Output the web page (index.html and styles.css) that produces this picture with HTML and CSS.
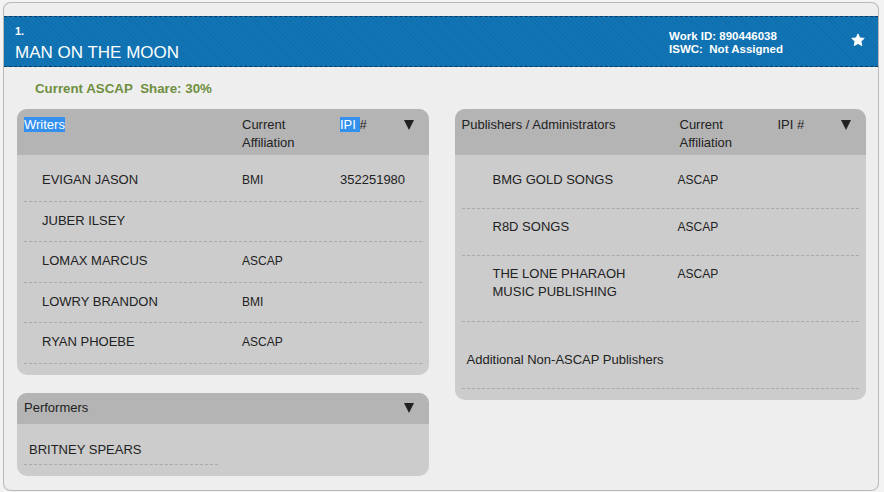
FILE: index.html
```html
<!DOCTYPE html>
<html lang="en">
<head>
  <meta charset="UTF-8" />
  <title>Man on the Moon - ASCAP</title>
  <link rel="stylesheet" href="styles.css">
</head>
<body>

<div class="work-card">
  <div class="work-header">
    <div class="work-title">
      <div class="work-num">1.</div>
      <div class="work-name">MAN ON THE MOON</div>
    </div>
    <div class="work-meta">
      <div>Work ID: 890446038</div>
      <div>ISWC:&nbsp; Not Assigned</div>
    </div>
    <svg class="star" width="14" height="14" viewBox="0 0 24 24">
      <polygon points="12,1.5 15.2,8.4 22.7,9.2 17.1,14.3 18.6,21.7 12,17.9 5.4,21.7 6.9,14.3 1.3,9.2 8.8,8.4" fill="#fff" stroke="#fff" stroke-width="1.5" stroke-linejoin="round"/>
    </svg>
  </div>

  <div class="share">Current ASCAP&nbsp; Share: 30%</div>

  <div class="columns">
    <div class="col">
      <div class="panel">
        <div class="panel-head">
          <div><span class="sel">Writers </span></div>
          <div>Current<br>Affiliation</div>
          <div><span class="sel">IPI </span>#</div>
          <svg class="arrow" width="10" height="10" viewBox="0 0 10 10"><polygon points="0,0 10,0 5,10" fill="#222"/></svg>
        </div>
        <div class="panel-body">
          <div class="row writer">
            <div class="name">EVIGAN JASON</div>
            <div class="aff">BMI</div>
            <div class="ipi">352251980</div>
          </div>
          <div class="row writer">
            <div class="name">JUBER ILSEY</div>
            <div class="aff"></div>
            <div class="ipi"></div>
          </div>
          <div class="row writer">
            <div class="name">LOMAX MARCUS</div>
            <div class="aff">ASCAP</div>
            <div class="ipi"></div>
          </div>
          <div class="row writer">
            <div class="name">LOWRY BRANDON</div>
            <div class="aff">BMI</div>
            <div class="ipi"></div>
          </div>
          <div class="row writer">
            <div class="name">RYAN PHOEBE</div>
            <div class="aff">ASCAP</div>
            <div class="ipi"></div>
          </div>
        </div>
      </div>

      <div class="panel performers">
        <div class="panel-head small">
          <div>Performers</div>
          <svg class="arrow" width="10" height="10" viewBox="0 0 10 10"><polygon points="0,0 10,0 5,10" fill="#222"/></svg>
        </div>
        <div class="panel-body">
          <div class="row performer">BRITNEY SPEARS</div>
        </div>
      </div>
    </div>

    <div class="col">
      <div class="panel">
        <div class="panel-head">
          <div>Publishers / Administrators</div>
          <div>Current<br>Affiliation</div>
          <div>IPI #</div>
          <svg class="arrow" width="10" height="10" viewBox="0 0 10 10"><polygon points="0,0 10,0 5,10" fill="#222"/></svg>
        </div>
        <div class="panel-body pub-body">
          <div class="row publisher">
            <div class="name">BMG GOLD SONGS</div>
            <div class="aff">ASCAP</div>
          </div>
          <div class="row publisher">
            <div class="name">R8D SONGS</div>
            <div class="aff">ASCAP</div>
          </div>
          <div class="row publisher tall">
            <div class="name">THE LONE PHARAOH<br>MUSIC PUBLISHING</div>
            <div class="aff">ASCAP</div>
          </div>
          <div class="row additional">Additional Non-ASCAP Publishers</div>
        </div>
      </div>
    </div>
  </div>
</div>

</body>
</html>
```

FILE: styles.css
```css
* { box-sizing: border-box; margin: 0; padding: 0; }
body {
  font-family: "Liberation Sans", Arial, sans-serif;
  background: #f3f3f3;
  color: #222;
  margin: 2px 5px 0 3px;
}
.work-card {
  background: #eeeeee;
  border: 1px solid #b9b9b9;
  border-radius: 8px;
  box-shadow: 0 0 2px rgba(0,0,0,0.15);
  padding: 13px 0 14px;
}
.work-header {
  display: flex;
  align-items: flex-start;
  height: 51px;
  background-color: #1174b5;
  background-image: repeating-linear-gradient(45deg, rgba(0,0,0,0.05) 0 1px, transparent 1px 3px);
  border-top: 1px dashed #0a3a60;
  border-bottom: 1px dashed #0a3a60;
  color: white;
  padding: 8px 13px 0 11px;
}
.work-title {
  flex-grow: 1;
}
.work-num {
  font-size: 11px;
  font-weight: bold;
  line-height: 13px;
  margin-bottom: 4px;
}
.work-name {
  font-size: 17px;
  line-height: 22px;
}
.work-meta {
  font-size: 11.5px;
  font-weight: bold;
  line-height: 13px;
  padding-top: 5px;
  margin-right: 68px;
}
.star {
  margin-top: 8px;
}
.share {
  color: #6f8f3f;
  font-size: 13.3px;
  font-weight: bold;
  line-height: 16px;
  padding: 14px 0 12px 31px;
}
.columns {
  display: flex;
  gap: 26px;
  padding: 0 12px 0 13px;
}
.col {
  flex: 1;
}
.panel {
  background: #cccccc;
  border-radius: 10px;
  overflow: hidden;
}
.panel-head {
  display: grid;
  grid-template-columns: 218px 98px 1fr 10px;
  background: #b4b4b4;
  font-size: 13px;
  line-height: 18px;
  height: 46px;
  padding: 7px 15px 0 7px;
}
.panel-head.small {
  grid-template-columns: 1fr 10px;
  height: 31px;
  padding-top: 6px;
}
.arrow {
  margin-top: 4px;
}
.sel {
  background: #3390ee;
  color: white;
}
.panel-body {
  padding: 6px 7px 11px;
}
.pub-body {
  padding-top: 7px;
}
.row {
  border-bottom: 1px dashed #a9a9a9;
}
.writer {
  display: grid;
  grid-template-columns: 200px 98px 1fr;
  padding: 11px 0 12.5px 18px;
  font-size: 13px;
  line-height: 16px;
}
.aff {
  font-size: 12px;
}
.publisher {
  display: grid;
  grid-template-columns: 185px 1fr;
  padding: 9px 0 19px 31px;
  font-size: 13px;
  line-height: 18px;
}
.publisher.tall {
  padding-bottom: 20px;
}
.additional {
  font-size: 13px;
  line-height: 18px;
  padding: 29px 0 19px 5px;
}
.performers {
  margin-top: 18px;
}
.performer {
  width: 194px;
  font-size: 13px;
  line-height: 16px;
  padding: 12px 0 6px 5px;
}
```
